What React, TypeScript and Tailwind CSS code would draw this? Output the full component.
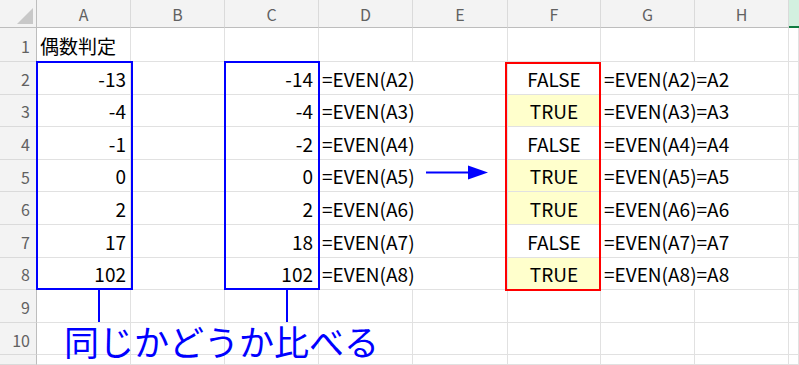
import React from "react";

const FONT = { fontFamily: '"Noto Sans CJK JP", "Noto Sans", sans-serif' };

const cols = ["A", "B", "C", "D", "E", "F", "G", "H"];
const aVals = ["-13", "-4", "-1", "0", "2", "17", "102"];
const cVals = ["-14", "-4", "-2", "0", "2", "18", "102"];
const fVals = ["FALSE", "TRUE", "FALSE", "TRUE", "TRUE", "FALSE", "TRUE"];

const cell = "border-r border-b border-[#e1e1e1] min-w-0";
const txt = "text-[19px] leading-none text-black whitespace-nowrap";

function HeaderRow() {
  return (
    <>
      <div className="bg-[#f3f3f3] border-r border-b border-[#bdbdbd] relative">
        <svg className="absolute left-[17px] top-[8px]" width="16" height="16" viewBox="0 0 16 16">
          <polygon points="16,0 16,16 0,16" fill="#c8c8c8" />
        </svg>
      </div>
      {cols.map((c) => (
        <div
          key={c}
          className="bg-[#f3f3f3] border-r border-[#dadada] border-b-[#bdbdbd] border-b flex items-center justify-center text-[16px] text-[#616161] leading-none pt-[1px]"
        >
          {c}
        </div>
      ))}
      <div className="bg-[#d3f0e0] border-b-2 border-[#107c41]" />
    </>
  );
}

function RowHead({ n }: { n?: number }) {
  return (
    <div className="bg-[#f3f3f3] border-r border-[#bdbdbd] border-b border-b-[#dadada] flex items-center justify-end pr-[6px] text-[16px] text-[#616161] leading-none pt-[2px]">
      {n}
    </div>
  );
}

export default function App() {
  const rows: React.ReactNode[] = [];

  rows.push(
    <React.Fragment key="r1">
      <RowHead n={1} />
      <div className={`${cell} flex items-end pb-[6px] pl-[3px]`}>
        <span className={txt}>偶数判定</span>
      </div>
      {[...Array(7)].map((_, i) => (
        <div key={i} className={cell} />
      ))}
      <div className={cell} />
    </React.Fragment>
  );

  for (let i = 0; i < 7; i++) {
    const r = i + 2;
    const yellow = fVals[i] === "TRUE";
    rows.push(
      <React.Fragment key={`r${r}`}>
        <RowHead n={r} />
        <div className={`${cell} flex items-end justify-end pb-[6px] pr-[4px]`}>
          <span className={txt}>{aVals[i]}</span>
        </div>
        <div className={cell} />
        <div className={`${cell} flex items-end justify-end pb-[6px] pr-[5px]`}>
          <span className={txt}>{cVals[i]}</span>
        </div>
        <div className={`${cell} col-span-2 flex items-end pb-[6px] pl-[3px]`}>
          <span className={txt}>=EVEN(A{r})</span>
        </div>
        <div className={`${cell} flex items-end justify-center pb-[6px] ${yellow ? "bg-[#ffffcc]" : ""}`}>
          <span className={txt}>{fVals[i]}</span>
        </div>
        <div className={`${cell} col-span-2 flex items-end pb-[6px] pl-[3px]`}>
          <span className={txt}>
            =EVEN(A{r})=A{r}
          </span>
        </div>
        <div className={cell} />
      </React.Fragment>
    );
  }

  for (const r of [9, 10, 11]) {
    rows.push(
      <React.Fragment key={`r${r}`}>
        <RowHead n={r === 11 ? undefined : r} />
        {[...Array(9)].map((_, i) => (
          <div key={i} className={cell} />
        ))}
      </React.Fragment>
    );
  }

  return (
    <div className="relative w-[799px] h-[365px] overflow-hidden bg-white" style={FONT}>
      <div className="grid h-full grid-cols-[37px_94px_94px_94px_94px_95px_93px_94px_94px_1fr] grid-rows-[28px_34px_repeat(9,32.6px)_1fr]">
        <HeaderRow />
        {rows}
      </div>

      <div className="absolute left-[36px] top-[61px] w-[97px] h-[229px] border-[2.5px] border-[#0000ff]" />
      <div className="absolute left-[224px] top-[61px] w-[96px] h-[229px] border-[2.5px] border-[#0000ff]" />
      <div className="absolute left-[98px] top-[290px] w-[2px] h-[32px] bg-[#0000ff]" />
      <div className="absolute left-[286px] top-[290px] w-[2px] h-[32px] bg-[#0000ff]" />
      <div className="absolute left-[505px] top-[62px] w-[96px] h-[229px] border-2 border-[#ff0000]" />
      <svg className="absolute left-[424px] top-[164px]" width="66" height="18" viewBox="0 0 66 18">
        <line x1="2" y1="8.5" x2="46" y2="8.5" stroke="#0000ff" strokeWidth="2" />
        <polygon points="44,1.5 64,8.5 44,15.5" fill="#0000ff" />
      </svg>
      <div className="absolute left-[64px] top-[323px] text-[35px] leading-none text-[#0000ff] whitespace-nowrap">
        同じかどうか比べる
      </div>
    </div>
  );
}
